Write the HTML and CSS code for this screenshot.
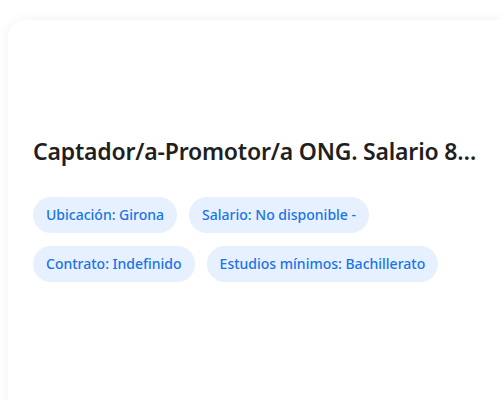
FILE: index.html
```html
<!DOCTYPE HTML>
<html>
    <head>
        <meta charset="utf-8">
        <link rel="stylesheet" href="styles.css">
    </head>
    <body class="page">
        <div class="jobCard">
            <h2 class="jobTitle">Captador/a-Promotor/a ONG. Salario 8.000€ + incentivos</h2>
            <div class="tagList">
                <span class="tag">Ubicación: Girona</span>
                <span class="tag">Salario: No disponible -</span>
                <span class="tag">Contrato: Indefinido</span>
                <span class="tag">Estudios mínimos: Bachillerato</span>
            </div>
        </div>
    </body>
</html>
```

FILE: styles.css
```css
html, body {
    margin: 0;
    height: 100%;
    overflow: hidden;
}
.page {
    background: #fff;
    font-family: "Noto Sans", "Open Sans", sans-serif;
    padding: 20px 0 0 8px;
    box-sizing: border-box;
}
.jobCard {
    width: 540px;
    height: 420px;
    background: #fff;
    border-radius: 16px;
    box-shadow: 0 0 12px rgba(0, 0, 0, 0.06);
    padding: 115px 25px 0 25px;
    box-sizing: border-box;
}
.jobTitle {
    margin: 0 0 30px 0;
    width: 444px;
    font-size: 23px;
    font-weight: 600;
    letter-spacing: -0.2px;
    color: #1f1f1f;
    white-space: nowrap;
    overflow: hidden;
    text-overflow: ellipsis;
}
.tagList {
    display: flex;
    flex-wrap: wrap;
    gap: 13px 12px;
    width: 420px;
}
.tag {
    background: #e6f0ff;
    color: #1a73e8;
    font-size: 14px;
    font-weight: 500;
    line-height: 20px;
    padding: 8px 13px;
    border-radius: 18px;
}
```
